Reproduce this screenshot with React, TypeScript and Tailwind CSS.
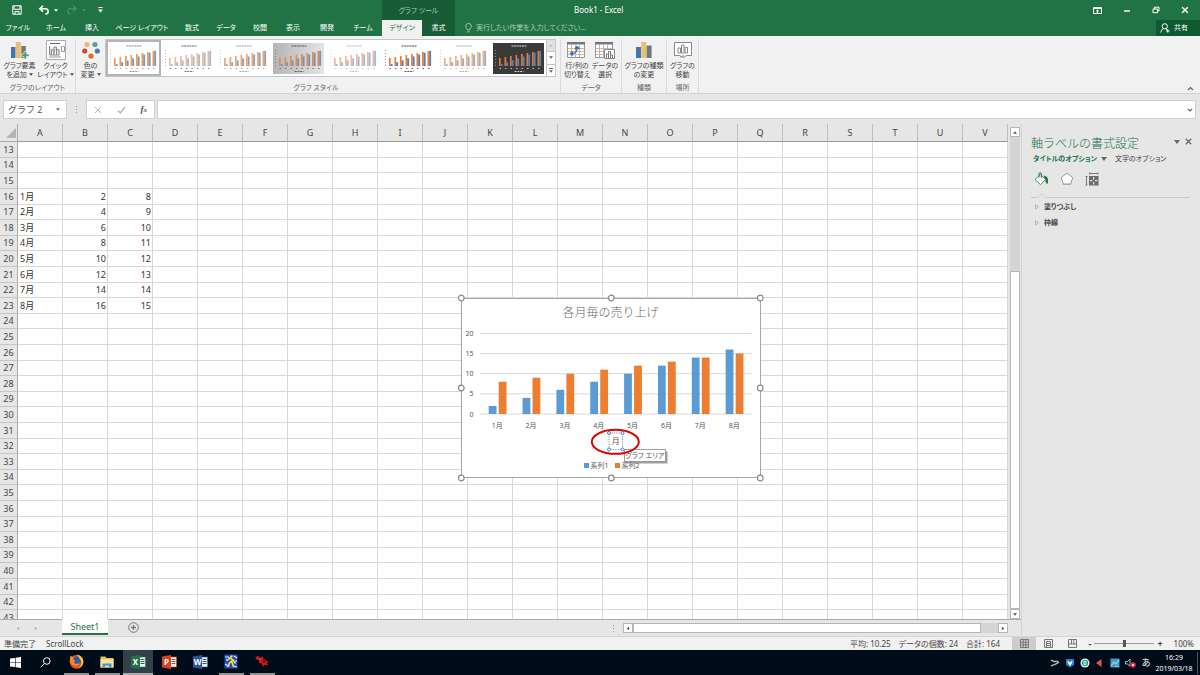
import {useState} from "react";
import type {ReactNode} from "react";
import {clsx} from "clsx";

const TABS = [
    {label: "ファイル", width: "w-9"},
    {label: "ホーム", width: "w-10"},
    {label: "挿入", width: "w-8"},
    {label: "ページ レイアウト", width: "w-17"},
    {label: "数式", width: "w-8"},
    {label: "データ", width: "w-9"},
    {label: "校閲", width: "w-8"},
    {label: "表示", width: "w-8.5"},
    {label: "開発", width: "w-8.5"},
    {label: "チーム", width: "w-9.5"},
];

const COLUMNS = "ABCDEFGHIJKLMNOPQRSTUV".split("");
const FIRST_ROW = 13;
const ROW_COUNT = 31;

const SALES = [
    {month: "1月", a: 2, b: 8},
    {month: "2月", a: 4, b: 9},
    {month: "3月", a: 6, b: 10},
    {month: "4月", a: 8, b: 11},
    {month: "5月", a: 10, b: 12},
    {month: "6月", a: 12, b: 13},
    {month: "7月", a: 14, b: 14},
    {month: "8月", a: 16, b: 15},
];
const SALES_START = 16;

const BLUE = "#5b9bd5";
const ORANGE = "#ed7d31";

const cellText = (row: number, col: string): string | number => {
    const entry = SALES[row - SALES_START];
    if (!entry) return "";
    if (col === "A") return entry.month;
    if (col === "B") return entry.a;
    if (col === "C") return entry.b;
    return "";
};

const Caret = ({className = ""}: {className?: string}) => (
    <svg viewBox="0 0 6 4" className={clsx("h-[3px] w-1 shrink-0", className)} fill="currentColor" aria-hidden="true">
        <path d="M0 0h6L3 4z" />
    </svg>
);

/* ---------- title bar ---------- */

const TitleBar = () => (
    <header className="flex h-9 shrink-0 bg-[#217346] text-white">
        <div className="flex w-[382px] shrink-0 flex-col">
            <div className="flex h-5 items-center pl-3">
                <button aria-label="上書き保存">
                    <svg viewBox="0 0 10 10" className="size-[10px]" fill="none" stroke="currentColor">
                        <path d="M.8.8h8.4v8.4H.8zM2 1v3.300h6V1M3 9V6.600h4V9" />
                    </svg>
                </button>
                <button aria-label="元に戻す" className="ml-4 flex items-center gap-1">
                    <svg viewBox="0 0 12 10" className="h-[10px] w-3" fill="none" stroke="currentColor" strokeWidth="1.6">
                        <path d="M5 .8 1.8 3.7 5 6.6M2 3.7h5.2c2 0 3 1.2 3 2.600S9 9 7.400 9" />
                    </svg>
                    <Caret />
                </button>
                <button aria-label="やり直し" className="ml-2 flex items-center gap-1 text-[#4c9069]">
                    <svg viewBox="0 0 12 10" className="h-[10px] w-3" fill="none" stroke="currentColor" strokeWidth="1.3">
                        <path d="m7 .8 3.200 2.900L7 6.600M10 3.700H4.800c-2 0-3 1.200-3 2.600S3 9 4.600 9" />
                    </svg>
                    <Caret />
                </button>
                <button aria-label="クイック アクセス ツール バーのユーザー設定" className="ml-3">
                    <svg viewBox="0 0 5 6" className="h-1.5 w-[5px]" fill="currentColor">
                        <path d="M.5 0h4v1h-4zM0 2.500h5L2.500 5.500z" />
                    </svg>
                </button>
            </div>
            <nav className="flex h-4 items-center text-[7px]">
                {TABS.map((tab) => (
                    <button key={tab.label} className={clsx("shrink-0 whitespace-nowrap text-center", tab.width)}>
                        {tab.label}
                    </button>
                ))}
            </nav>
        </div>
        <div className="flex w-[73px] shrink-0 flex-col bg-[#185c37] text-[7px]">
            <div className="flex h-5 items-center justify-center pt-0.5 text-[#a9cbb7]">グラフ ツール</div>
            <div className="flex h-4">
                <button className="w-10 bg-[#f1f1f1] text-[#217346]">デザイン</button>
                <button className="flex-1">書式</button>
            </div>
        </div>
        <div className="flex min-w-0 flex-1 flex-col">
            <div className="flex h-5 items-center">
                <h1 className="flex-1 pl-[119px] text-[8px]">Book1 - Excel</h1>
                <div className="flex items-center gap-[21px] pr-[11px]">
                    <button aria-label="リボンの表示オプション">
                        <svg viewBox="0 0 9 7" className="h-[7px] w-[9px]" fill="none" stroke="currentColor">
                            <path d="M.5.5h8v6h-8zM.5 1.500h8M4.500 6V3M3 4.300 4.500 3 6 4.300" />
                        </svg>
                    </button>
                    <button aria-label="最小化">
                        <svg viewBox="0 0 8 8" className="size-2" stroke="currentColor" strokeWidth="1.4">
                            <path d="M1 5h6" />
                        </svg>
                    </button>
                    <button aria-label="元に戻す (縮小)">
                        <svg viewBox="0 0 8 8" className="size-2" fill="none" stroke="currentColor">
                            <path d="M1 3h4.500v3.700H1zM2.500 3V1.200H7V5H5.500" />
                        </svg>
                    </button>
                    <button aria-label="閉じる">
                        <svg viewBox="0 0 8 8" className="size-2" stroke="currentColor" strokeWidth="1.5">
                            <path d="m1.200 1.200 5.600 5.600M6.800 1.200 1.200 6.800" />
                        </svg>
                    </button>
                </div>
            </div>
            <div className="flex h-4 items-center justify-between">
                <label className="flex flex-1 items-center gap-1 pl-2.5 text-[#a9cbb7]">
                    <svg viewBox="0 0 7 10" className="h-[10px] w-[7px]" fill="none" stroke="currentColor">
                        <path d="M2.300 6.800c0-1.400-1.600-1.800-1.600-3.600a2.800 2.800 0 0 1 5.600 0c0 1.800-1.600 2.200-1.600 3.600zM2.300 8.800h2.400" />
                    </svg>
                    <input
                        aria-label="操作アシスト"
                        placeholder="実行したい作業を入力してください..."
                        className="w-40 bg-transparent text-[7px] outline-none placeholder:text-[#a9cbb7]"
                    />
                </label>
                <button className="flex h-4 w-11 items-center gap-1 bg-[#0f5a30] pl-1 text-[7px]">
                    <svg viewBox="0 0 10 10" className="size-[10px]" fill="none" stroke="currentColor">
                        <circle cx="4.800" cy="3.300" r="2.600" />
                        <path d="M.8 9.500c.3-2 1.200-3.200 2.500-3.800M6 5.700l1.300 1.400M7.800 6.300v3.400M6.100 8h3.400" />
                    </svg>
                    共有
                </button>
            </div>
        </div>
    </header>
);

/* ---------- ribbon ---------- */

const AddElementIcon = () => (
    <svg viewBox="0 0 18 18" className="size-[18px]" aria-hidden="true">
        <path fill="#3f76b0" d="M0 6h4.500v11H0z" />
        <path fill="#e8c070" d="M4.800 1h5v16h-5z" />
        <path fill="#777" d="M10.300 5h4.500v12h-4.500z" />
        <path fill="#4f9b7a" stroke="#f1f1f1" strokeWidth=".6" d="M13 10.500h2.500V13H18v2.500h-2.500V18H13v-2.500h-2.500V13H13z" />
    </svg>
);

const QuickLayoutIcon = () => (
    <svg viewBox="0 0 20 20" className="size-5" fill="none" stroke="#8a8a8a" aria-hidden="true">
        <path fill="#fff" stroke="#aaa" d="M.5.5h19v19H.5z" />
        <path d="M4 3.500h10" stroke="#666" />
        <path fill="#ddd" d="M3.500 6v9h10M5.500 15v-5H8v5M8 15V7h2.500v8M10.500 15V9.500H13V15" />
        <path d="M15.500 6.500h3v5h-3zM3 17h12" stroke="#999" />
    </svg>
);

const ColorsIcon = () => (
    <svg viewBox="0 0 18 18" className="size-[18px]" aria-hidden="true">
        <circle cx="5" cy="3.500" r="2.600" fill="#e8bb7a" />
        <circle cx="13" cy="3.500" r="2.600" fill="#5f9e98" />
        <circle cx="2.700" cy="10" r="2.600" fill="#c8502e" />
        <circle cx="15.300" cy="10" r="2.600" fill="#4a79b5" />
        <circle cx="9" cy="15" r="2.600" fill="#dd6b28" />
    </svg>
);

const SheetIcon = ({children}: {children: ReactNode}) => (
    <svg viewBox="0 0 20 18" className="h-[18px] w-5" fill="none" aria-hidden="true">
        <path fill="#fff" stroke="#999" d="M.5 1.500h17v15H.5z" />
        <path stroke="#e0b88a" d="M1 7.500h16M1 10.500h16M1 13.500h16" />
        <path stroke="#b5b5b5" d="M4.500 4v12M8.500 4v12M12.500 4v12" />
        <path fill="#777" d="M0 1h18v2.500H0z" />
        {children}
    </svg>
);

const ChartTypeIcon = () => (
    <svg viewBox="0 0 16 18" className="h-[18px] w-4" aria-hidden="true">
        <path fill="#3f76b0" d="M0 6h5v11H0z" />
        <path fill="#e8c070" d="M5.300 1h5v16h-5z" />
        <path fill="#777" d="M10.600 4.500h5V17h-5z" />
    </svg>
);

const MoveChartIcon = () => (
    <svg viewBox="0 0 18 18" className="size-[18px]" fill="none" stroke="#888" aria-hidden="true">
        <path fill="#fff" d="M.5 1.500h17v13h-5l-3 2-4-2h-5z" />
        <path d="M4 12V7h2.500v5zM7.500 12V4H10v8zM11 12V6.500h2.500V12zM6 16.500l2-1.500h2" />
    </svg>
);

const RibbonButton = ({icon, lines, caret, className}: {icon: ReactNode; lines: [string, string]; caret?: boolean; className: string}) => (
    <button className={clsx("flex shrink-0 flex-col items-center whitespace-nowrap text-[7px] leading-[9px] text-[#444]", className)}>
        <span className="flex h-[22px] items-center">{icon}</span>
        <span>{lines[0]}</span>
        <span className="flex items-center gap-0.5">
            {lines[1]}
            {caret && <Caret />}
        </span>
    </button>
);

const RibbonGroup = ({label, className, children}: {label: string; className: string; children: ReactNode}) => (
    <section className={clsx("flex shrink-0 flex-col justify-between border-r border-[#dadada]", className)}>
        <div className="flex justify-center">{children}</div>
        <h2 className="text-center text-[7px] leading-[10px] text-[#666]">{label}</h2>
    </section>
);

const THUMBS = [
    {bg: "bg-white", blue: "#8495a8", orange: "#f09a5c", text: "#888"},
    {bg: "bg-white", blue: "#b4b8be", orange: "#e3c0a6", text: "#666"},
    {bg: "bg-white", blue: "#9aa0a8", orange: "#eda679", text: "#999"},
    {bg: "bg-linear-to-r from-[#b4b4b4] to-[#e4e4e4]", blue: "#7d93ad", orange: "#e08a55", text: "#555"},
    {bg: "bg-white", blue: "#a4b8d8", orange: "#f2b79c", text: "#bbb"},
    {bg: "bg-white", blue: "#5a7fa8", orange: "#ed7d31", text: "#444"},
    {bg: "bg-white", blue: "#a5acb5", orange: "#eeb288", text: "#aaa"},
    {bg: "bg-[#3a3a3a]", blue: "#5b83ad", orange: "#e07a3a", text: "#ddd"},
];

const StyleThumb = ({index}: {index: number}) => {
    const t = THUMBS[index];
    return (
        <svg viewBox="0 0 50 31" className={clsx("h-[31px] w-full", t.bg)} aria-hidden="true">
            <path d="M18 3h15" stroke={t.text} strokeWidth="1.200" strokeDasharray="2 .6" />
            {SALES.map((s, i) => (
                <g key={s.month}>
                    <rect x={5.5 + i * 5.5} y={23 - s.b} width="1.700" height={s.b} fill={t.orange} />
                    <rect x={7.2 + i * 5.5} y={23 - s.a * 0.95} width="1.900" height={s.a * 0.95} fill={t.blue} />
                </g>
            ))}
            <path d="M6 25.500h42" stroke={t.text} strokeWidth=".8" strokeDasharray="1.500 4" />
            <path d="M2 7v16" stroke={t.text} strokeWidth=".5" strokeDasharray="1 2" />
            <path d="M21 28.500h9" stroke={t.text} strokeWidth=".9" strokeDasharray="2 .8" />
        </svg>
    );
};

const Ribbon = () => {
    const [style, setStyle] = useState(0);
    return (
        <div className="flex h-[58px] shrink-0 items-stretch border-b border-[#d2d2d2] bg-[#f1f1f1] pt-[3px]">
            <RibbonGroup label="グラフのレイアウト" className="w-19">
                <RibbonButton icon={<AddElementIcon />} lines={["グラフ要素", "を追加"]} caret className="w-9" />
                <RibbonButton icon={<QuickLayoutIcon />} lines={["クイック", "レイアウト"]} caret className="w-9" />
            </RibbonGroup>
            <RibbonGroup label="グラフ スタイル" className="w-[485px] pr-1">
                <RibbonButton icon={<ColorsIcon />} lines={["色の", "変更"]} caret className="w-7" />
                <div className="flex h-[38px] w-[451px] border border-[#c6c6c6] bg-white">
                    {THUMBS.map((_, i) => (
                        <button
                            key={i}
                            aria-label={`スタイル ${i + 1}`}
                            onClick={() => setStyle(i)}
                            className={clsx("flex flex-1 items-center border-2", i === style ? "border-[#b5b5b5]" : "border-transparent")}
                        >
                            <StyleThumb index={i} />
                        </button>
                    ))}
                    <div className="flex w-[9px] flex-col divide-y divide-[#c6c6c6] border-l border-[#c6c6c6] text-[#666]">
                        <button aria-label="前の行" className="flex flex-1 items-center justify-center bg-[#e1e1e1] text-[#bbb]">
                            <Caret className="rotate-180" />
                        </button>
                        <button aria-label="次の行" className="flex flex-1 items-center justify-center">
                            <Caret />
                        </button>
                        <button aria-label="その他" className="flex flex-1 flex-col items-center justify-center gap-px">
                            <span className="h-px w-1 bg-[#666]" />
                            <Caret />
                        </button>
                    </div>
                </div>
            </RibbonGroup>
            <RibbonGroup label="データ" className="w-[61px]">
                <RibbonButton
                    icon={
                        <SheetIcon>
                            <path stroke="#2f6fb5" strokeWidth="1.400" d="M3.500 12.500c5 .5 7-2 6.500-6.500M8 8l2-2.500L12.500 8M6 10.500l-2.500 2L6 14.500" />
                        </SheetIcon>
                    }
                    lines={["行/列の", "切り替え"]}
                    className="w-7"
                />
                <RibbonButton
                    icon={
                        <SheetIcon>
                            <path fill="#fff" stroke="#888" d="M9.500 8.500h10v9h-10z" />
                            <path stroke="#777" d="M11.500 17v-4h2v4M13.500 17v-6.500h2V17M15.500 14h2v3" />
                        </SheetIcon>
                    }
                    lines={["データの", "選択"]}
                    className="w-7"
                />
            </RibbonGroup>
            <RibbonGroup label="種類" className="w-[45px]">
                <RibbonButton icon={<ChartTypeIcon />} lines={["グラフの種類", "の変更"]} className="w-11" />
            </RibbonGroup>
            <RibbonGroup label="場所" className="w-8">
                <RibbonButton icon={<MoveChartIcon />} lines={["グラフの", "移動"]} className="w-7" />
            </RibbonGroup>
            <button aria-label="リボンを折りたたむ" className="mt-auto mr-1.5 mb-0.5 ml-auto text-[#666]">
                <svg viewBox="0 0 7 5" className="h-[5px] w-[7px]" fill="none" stroke="currentColor" strokeWidth="1.200">
                    <path d="m1 4 2.500-2.500L6 4" />
                </svg>
            </button>
        </div>
    );
};

const Grip = () => (
    <span className="flex flex-col gap-0.5" aria-hidden="true">
        <span className="size-px bg-[#999]" />
        <span className="size-px bg-[#999]" />
        <span className="size-px bg-[#999]" />
    </span>
);

const FormulaBar = () => (
    <div className="flex h-[30px] shrink-0 items-center bg-[#e6e6e6] pt-1.5 pr-1 pb-[5px] pl-[3px]">
        <label className="flex h-[19px] w-16 items-center border border-[#cfcfcf] bg-white pr-1.5 text-[#666]">
            <input
                aria-label="名前ボックス"
                defaultValue="グラフ 2"
                className="w-0 flex-1 bg-transparent pl-1 text-[9px] text-[#555] outline-none [font-feature-settings:normal]"
            />
            <Caret />
        </label>
        <span className="flex w-[19px] justify-center">
            <Grip />
        </span>
        <div className="flex h-[19px] w-[69px] items-center justify-between border border-[#cfcfcf] bg-white px-[7px]">
            <button aria-label="キャンセル" className="text-[#b5b5b5]">
                <svg viewBox="0 0 8 8" className="size-2" stroke="currentColor">
                    <path d="m1 1 6 6M7 1 1 7" />
                </svg>
            </button>
            <button aria-label="入力" className="text-[#b5b5b5]">
                <svg viewBox="0 0 9 8" className="h-2 w-[9px]" fill="none" stroke="currentColor" strokeWidth="1.300">
                    <path d="m1 4.500 2.300 2.500L8 1" />
                </svg>
            </button>
            <button aria-label="関数の挿入" className="font-['Liberation_Serif',serif] text-[9px] leading-3 font-bold text-[#555] italic">
                f<span className="text-[7px]">x</span>
            </button>
        </div>
        <label className="ml-0.5 flex h-[19px] flex-1 items-center border border-[#cfcfcf] bg-white pr-0.5 text-[#666]">
            <input aria-label="数式バー" className="min-w-0 flex-1 bg-transparent pl-1 text-[9px] outline-none" />
            <svg viewBox="0 0 6 4" className="h-1 w-1.5" fill="none" stroke="currentColor" strokeWidth="1.200">
                <path d="m.8.8 2.200 2.200L5.200.8" />
            </svg>
        </label>
    </div>
);

/* ---------- sheet ---------- */

const PLOT_BOTTOM = 116;
const UNIT = 4.03;
const HANDLES = [
    [0, 0], [150, 0], [299, 0],
    [0, 90], [299, 90],
    [0, 180], [150, 180], [299, 180],
];
const TITLE_HANDLES = [
    [148, 135], [161.5, 135], [148, 151.5], [161.5, 151.5],
];

const SalesChart = () => (
    <svg
        viewBox="-5 -5 310 190"
        className="absolute top-[169px] left-[456px] h-[190px] w-[310px] [font-feature-settings:'palt']"
        role="img"
        aria-label="各月毎の売り上げ"
    >
        <rect x=".5" y=".5" width="299" height="179" fill="#fff" stroke="#a6a6a6" />
        <text x="149.500" y="19" textAnchor="middle" fontSize="12" fill="#666" className="font-light [font-feature-settings:normal]">
            各月毎の売り上げ
        </text>
        {[0, 5, 10, 15, 20].map((v) => (
            <g key={v}>
                <path d={`M19 ${PLOT_BOTTOM - v * UNIT}h271.500`} stroke="#d9d9d9" />
                <text x="12.500" y={PLOT_BOTTOM - v * UNIT + 2.5} textAnchor="end" fontSize="7" fill="#555">
                    {v}
                </text>
            </g>
        ))}
        {SALES.map((s, i) => {
            const x = 27.7 + i * 33.85;
            return (
                <g key={s.month}>
                    <rect x={x} y={PLOT_BOTTOM - s.a * UNIT} width="7.800" height={s.a * UNIT} fill={BLUE} />
                    <rect x={x + 10} y={PLOT_BOTTOM - s.b * UNIT} width="7.800" height={s.b * UNIT} fill={ORANGE} />
                    <text x={x + 8.5} y="129.500" textAnchor="middle" fontSize="7" fill="#555">
                        {s.month}
                    </text>
                </g>
            );
        })}
        <rect x="123" y="165" width="5" height="5" fill={BLUE} />
        <text x="129.500" y="170" fontSize="7" fill="#555">系列1</text>
        <rect x="154" y="165" width="5" height="5" fill={ORANGE} />
        <text x="160.500" y="170" fontSize="7" fill="#555">系列2</text>

        {HANDLES.map(([x, y]) => (
            <circle key={`${x}-${y}`} cx={x + 0.3} cy={y} r="2.800" fill="#fff" stroke="#8a8a8a" strokeWidth="1.200" />
        ))}

        <rect x="148" y="135" width="13.500" height="16.500" fill="none" stroke="#777" strokeWidth=".8" strokeDasharray="1.200 1.200" />
        <text x="154.700" y="146" textAnchor="middle" fontSize="8" fill="#555">月</text>

        <rect x="165" y="153.500" width="41.500" height="12" fill="#777" opacity=".7" />
        <rect x="163.500" y="151.500" width="41" height="12" fill="#fff" stroke="#8a8a8a" strokeWidth=".8" />
        <text x="184" y="160" textAnchor="middle" fontSize="7" fill="#555">グラフ エリア</text>
        {TITLE_HANDLES.map(([x, y]) => (
            <circle key={`${x}-${y}`} cx={x} cy={y} r="1.500" fill="#fff" stroke="#2f84c8" />
        ))}
        <ellipse cx="154.300" cy="143.800" rx="23.500" ry="12" fill="none" stroke="#e00000" strokeWidth="2" />
    </svg>
);

const Grid = () => (
    <table className="w-full table-fixed border-separate border-spacing-0 text-[9px] leading-3 text-[#333]">
        <thead>
            <tr className="h-[18px] bg-[#e6e6e6] text-[#444]">
                <th className="w-[18px] border-r border-b border-[#ababab] p-0 align-bottom">
                    <svg viewBox="0 0 10 10" className="mb-[3px] ml-1.5 size-[10px]" aria-hidden="true">
                        <path d="M10 0v10H0z" fill="#b4b4b4" />
                    </svg>
                </th>
                {COLUMNS.map((c) => (
                    <th key={c} scope="col" className="border-r border-b border-r-[#bdbdbd] border-b-[#9b9b9b] p-0 font-normal">
                        {c}
                    </th>
                ))}
            </tr>
        </thead>
        <tbody>
            {Array.from({length: ROW_COUNT}, (_, i) => FIRST_ROW + i).map((row, i) => (
                <tr key={row} className={i % 5 === 1 || i % 5 === 4 ? "h-[15px]" : "h-4"}>
                    <th scope="row" className="border-r border-b border-r-[#ababab] border-b-[#c6c6c6] bg-[#e6e6e6] p-0 font-normal text-[#444]">
                        {row}
                    </th>
                    {COLUMNS.map((c) => (
                        <td
                            key={c}
                            className={clsx("border-r border-b border-[#d8d8d8] bg-white p-0", c === "A" ? "pl-0.5 text-left" : "pr-px text-right")}
                        >
                            {cellText(row, c)}
                        </td>
                    ))}
                </tr>
            ))}
        </tbody>
    </table>
);

const VerticalScroll = () => (
    <div className="flex w-[13px] shrink-0 flex-col items-center bg-[#e6e6e6] pt-[3px] text-[#555]">
        <button aria-label="上へスクロール" className="flex size-[10px] items-center justify-center border border-[#b5b5b5] bg-white">
            <Caret className="rotate-180" />
        </button>
        <div className="flex w-[10px] flex-1 flex-col bg-[#d4d4d4]">
            <div className="flex-2" />
            <div className="flex-5 border border-[#b5b5b5] bg-white" />
        </div>
        <button aria-label="下へスクロール" className="flex size-[10px] items-center justify-center border border-[#b5b5b5] bg-white">
            <Caret />
        </button>
    </div>
);

const SheetTabs = () => (
    <div className="flex h-[17px] shrink-0 items-start border-t border-[#ababab] bg-[#e6e6e6] pr-[13px]">
        <div className="flex h-full w-[62px] items-center gap-3.5 pl-4 text-[#b5b5b5]">
            <button aria-label="前のシート"><Caret className="rotate-90" /></button>
            <button aria-label="次のシート"><Caret className="-rotate-90" /></button>
        </div>
        <button className="-mt-px h-4 w-[46px] border-b-2 border-[#217346] bg-white pt-0.5 text-[9px] leading-3 text-[#217346]">Sheet1</button>
        <button aria-label="新しいシート" className="mt-0.5 ml-5">
            <svg viewBox="0 0 11 11" className="size-[11px]" fill="none" stroke="#777">
                <circle cx="5.500" cy="5.500" r="4.800" />
                <path d="M5.500 3v5M3 5.500h5" strokeWidth="1.300" />
            </svg>
        </button>
        <div className="ml-auto flex h-full items-center gap-[9px] text-[#555]">
            <Grip />
            <div className="flex h-[10px] w-[385px] bg-[#d4d4d4]">
                <button aria-label="左へスクロール" className="flex size-[10px] items-center justify-center border border-[#b5b5b5] bg-white">
                    <Caret className="rotate-90" />
                </button>
                <div className="w-[348px] border border-[#b5b5b5] bg-white" />
                <button aria-label="右へスクロール" className="ml-auto flex size-[10px] items-center justify-center border border-[#b5b5b5] bg-white">
                    <Caret className="-rotate-90" />
                </button>
            </div>
        </div>
    </div>
);

/* ---------- format pane ---------- */

const FormatPane = () => (
    <aside className="w-[179px] shrink-0 border-l border-[#d4d4d4] bg-[#e6e6e6] pt-3 pr-2.5 pl-[9px] text-[#444]">
        <div className="flex items-start justify-between">
            <h2 className="text-[12px] leading-4 font-light text-[#217346] [font-feature-settings:normal]">軸ラベルの書式設定</h2>
            <div className="-mr-0.5 flex items-center gap-[5px] pt-0.5 text-[#666]">
                <button aria-label="作業ウィンドウ オプション">
                    <svg viewBox="0 0 6 4" className="h-1 w-1.5" fill="currentColor">
                        <path d="M0 0h6L3 4z" />
                    </svg>
                </button>
                <button aria-label="閉じる">
                    <svg viewBox="0 0 7 7" className="size-[7px]" stroke="currentColor" strokeWidth="1.300">
                        <path d="m.8.8 5.400 5.400M6.200.8.8 6.200" />
                    </svg>
                </button>
            </div>
        </div>
        <div className="flex items-center pt-px pl-0.5 text-[7px] leading-3">
            <button className="flex items-center gap-1 font-bold text-[#217346]">
                タイトルのオプション
                <svg viewBox="0 0 6 4" className="h-1 w-1.5 text-[#666]" fill="currentColor" aria-hidden="true">
                    <path d="M0 0h6L3 4z" />
                </svg>
            </button>
            <button className="ml-2">文字のオプション</button>
        </div>
        <div className="flex items-center gap-[11px] pt-[7px] pl-[3px]">
            <button aria-label="塗りつぶしと線">
                <svg viewBox="0 0 15 14" className="h-[14px] w-[15px]" fill="none">
                    <path d="M9.500 3.500c4 .3 5.600 3.500 4 8.500-2-.5-2-3-2.500-5z" fill="#217346" />
                    <path d="m6.500 2.500 5.200 5-5.200 5.200L1 7.500z" fill="#fff" stroke="#4b8f69" />
                    <path d="M5 5.500V1.800C5 .3 7.300.3 7.300 1.800v4.500" stroke="#217346" />
                </svg>
            </button>
            <button aria-label="効果">
                <svg viewBox="0 0 14 14" className="size-[14px]">
                    <path d="M2.500 11.500 3 13h8l.5-1.500z" fill="#bbb" />
                    <path d="M7 1.200 12.800 5.500l-2.200 6.500H3.400L1.200 5.500z" fill="#fff" stroke="#999" />
                </svg>
            </button>
            <button aria-label="サイズとプロパティ">
                <svg viewBox="0 0 14 14" className="size-[14px]" fill="none" stroke="#777">
                    <path d="M4 1.500h9M4.500.5v2M13 .5v2M1.500 4v9M.5 4.500h2M.5 13h2" />
                    <path d="M4 4h9.500v9.500H4z" fill="#6b6b6b" stroke="none" />
                    <path d="M8.700 5v2.500M8.700 10v2.500M5 8.700h2.500M10 8.700h2.500" stroke="#fff" />
                </svg>
            </button>
        </div>
        <svg viewBox="0 0 160 6" className="mt-1.5 h-1.5 w-full" fill="none" stroke="#c9c9c9" preserveAspectRatio="none" aria-hidden="true">
            <path d="M0 5.500h7l4-4 4 4h145" />
        </svg>
        <div className="flex flex-col pt-px pl-1 text-[7px] leading-4 font-bold">
            {["塗りつぶし", "枠線"].map((label) => (
                <button key={label} className="flex items-center gap-[5px]">
                    <svg viewBox="0 0 4 6" className="h-1.5 w-1" fill="none" stroke="#aaa" strokeWidth=".8">
                        <path d="M.5.8 3.300 3 .5 5.200z" />
                    </svg>
                    {label}
                </button>
            ))}
        </div>
    </aside>
);

/* ---------- status bar ---------- */

const StatusBar = () => (
    <footer className="flex h-[14px] shrink-0 items-center border-t border-[#d4d4d4] bg-[#f1f1f1] pr-1.5 pl-1 text-[8px] text-[#444]">
        <span className="w-[42px] shrink-0">準備完了</span>
        <span>ScrollLock</span>
        <div className="ml-auto flex gap-2 pr-3">
            <span>平均: 10.25</span>
            <span>データの個数: 24</span>
            <span>合計: 164</span>
        </div>
        <div className="flex h-full items-center text-[#777]">
            <button aria-label="標準" className="flex h-full w-6 items-center justify-center bg-[#cdcdcd]">
                <svg viewBox="0 0 9 9" className="size-[9px]" fill="none" stroke="currentColor">
                    <path d="M.5.5h8v8h-8zM.5 3.200h8M.5 5.800h8M3.200.5v8M5.800.5v8" />
                </svg>
            </button>
            <button aria-label="ページ レイアウト表示" className="flex h-full w-6 items-center justify-center">
                <svg viewBox="0 0 9 9" className="size-[9px]" fill="none" stroke="currentColor">
                    <path d="M.5.5h8v8h-8zM2.500 2.500h4v6M2.500 2.500v6M3 4.500h3M3 6.500h3" />
                </svg>
            </button>
            <button aria-label="改ページ プレビュー" className="flex h-full w-6 items-center justify-center">
                <svg viewBox="0 0 9 9" className="size-[9px]" fill="none" stroke="currentColor">
                    <path d="M.5.5h8v8h-8zM3.500.5v4.500h5M.5 5h3M5.800.5V5" />
                </svg>
            </button>
        </div>
        <button aria-label="縮小" className="ml-0.5 w-2 text-[9px] leading-3 font-bold">-</button>
        <input
            type="range"
            aria-label="ズーム"
            min={0}
            max={200}
            defaultValue={100}
            className="h-2 w-15 appearance-none bg-transparent [&::-webkit-slider-runnable-track]:h-px [&::-webkit-slider-runnable-track]:bg-[#999] [&::-webkit-slider-thumb]:-mt-[3px] [&::-webkit-slider-thumb]:h-[7px] [&::-webkit-slider-thumb]:w-[3px] [&::-webkit-slider-thumb]:appearance-none [&::-webkit-slider-thumb]:bg-[#555]"
        />
        <button aria-label="拡大" className="w-3 text-[9px] leading-3 font-bold">+</button>
        <span className="w-7 text-right">100%</span>
    </footer>
);

/* ---------- taskbar ---------- */

const OfficeIcon = ({letter, color}: {letter: string; color: string}) => (
    <svg viewBox="0 0 15 14" className="h-[14px] w-[15px]" aria-hidden="true">
        <path d="M7 2h7.500v10H7z" fill="#f4f4f4" stroke={color} strokeWidth=".6" />
        <path d="M9.500 4.500h4M9.500 6.500h4M9.500 8.500h4" stroke={color} />
        <path d="M0 1.500 9 0v14l-9-1.500z" fill={color} />
        <text x="4.500" y="9.800" textAnchor="middle" fontSize="8" fontWeight="700" fill="#fff">
            {letter}
        </text>
    </svg>
);

const TASKS: {name: string; state: "none" | "open" | "active"; icon: ReactNode}[] = [
    {
        name: "Firefox",
        state: "open",
        icon: (
            <svg viewBox="0 0 15 15" className="size-[15px]">
                <circle cx="7.500" cy="7.800" r="6.900" fill="#e8541c" />
                <circle cx="7.800" cy="6.800" r="4.300" fill="#2c5aa8" />
                <path d="M8 .8c4.500.5 6.800 4 6.300 8-.5 3-3 5.200-5 5.500 2.500-2 3.500-4.500 2.700-7C11.500 5 9.500 3.500 8 .8z" fill="#ffc32e" />
                <path d="M1 4c0-1 .5-2 1-2.500.5 1 1.500 1.500 3 1.500L4 5.500c1 .5 2 .3 2.500.8-.8 1-1.500 1-1.500 2 1 2 4 2 6 .5-1 3-5 4-7.500 2S.6 7 1 4z" fill="#ff8a1f" />
            </svg>
        ),
    },
    {
        name: "エクスプローラー",
        state: "open",
        icon: (
            <svg viewBox="0 0 14 12" className="h-3 w-[14px]">
                <path d="M.5.5h5l1 1.500h7v9.500H.5z" fill="#e8b84a" />
                <path d="M.5 3h13v8.500H.5z" fill="#fbe19a" />
                <path d="M2.500 11.500V7.500h9v4H9V9.800H5v1.700z" fill="#3f9bd8" />
            </svg>
        ),
    },
    {name: "Excel", state: "active", icon: <OfficeIcon letter="X" color="#217346" />},
    {name: "PowerPoint", state: "none", icon: <OfficeIcon letter="P" color="#d04423" />},
    {name: "Word", state: "none", icon: <OfficeIcon letter="W" color="#2b579a" />},
    {
        name: "ペイント ツール",
        state: "open",
        icon: (
            <svg viewBox="0 0 14 15" className="h-[15px] w-[14px]" fill="none">
                <path fill="#1f4fc0" d="M.5.5h13v14H.5z" />
                <path stroke="#e8f0ff" strokeWidth="1.200" d="M1 3h4M10 2l3 2M1 10l3 2M9 12l4 1M2 6h2M11 7h2" />
                <path stroke="#ffe23a" strokeWidth="1.600" d="M8.500 1.500 6 4l3 2-3.500 3L4 13M9 6l2.500 3.500M6 4 3 6.500M8 8l1.500 5" />
            </svg>
        ),
    },
    {
        name: "キャプチャ ツール",
        state: "open",
        icon: (
            <svg viewBox="0 0 15 13" className="h-[13px] w-[15px]">
                <path d="M.5 2 3.500 1l1.500 2L8 1.500l.5 3.300 2.500-.6L10.500 6l3.800.8-2.800 1.400 1.800 2.600-3.600-1L8 12 6.800 8.500 3.500 7.800 4.500 5 1 4.500z" fill="#d01818" />
                <circle cx="9" cy="6.800" r="1.200" fill="#5a0505" />
                <circle cx="5" cy="4.300" r=".8" fill="#ff6b5a" />
            </svg>
        ),
    },
];

const TrayIcons = () => (
    <div className="flex items-center gap-[5px]">
        <svg viewBox="0 0 10 8" className="h-2 w-[10px]" fill="none" stroke="#b5b5b5" strokeWidth="1.400" aria-hidden="true">
            <path d="M1 1.200 4 2.500h4.500M1 6.800l4-1.500 4-2" />
        </svg>
        <svg viewBox="0 0 10 10" className="size-[10px]" fill="none" aria-hidden="true">
            <path d="M1 1h8v6L5 9.500 1 7z" fill="#2c7fd0" />
            <path d="M3 3.500 5 6.500l2-3" stroke="#fff" strokeWidth="1.600" />
        </svg>
        <svg viewBox="0 0 10 10" className="size-[10px]" fill="none" aria-hidden="true">
            <circle cx="5" cy="5" r="4.500" fill="#e4f6f2" />
            <circle cx="5" cy="5" r="2.600" stroke="#1d9c8c" strokeWidth="1.200" />
            <path d="M3 5h4" stroke="#1d9c8c" />
        </svg>
        <svg viewBox="0 0 8 10" className="h-[10px] w-2" aria-hidden="true">
            <path d="M6.500 1v8L1 5z" fill="#e0564e" />
        </svg>
        <svg viewBox="0 0 10 10" className="ml-0.5 size-[10px]" fill="none" aria-hidden="true">
            <path d="M.5.500h9v9h-9z" fill="#3c9bd6" />
            <path d="M1 8 4 4l2 2 3-4" stroke="#8fd0c8" strokeWidth="1.400" />
            <path d="M5 8.500h4" stroke="#d8b48a" />
        </svg>
        <svg viewBox="0 0 11 10" className="h-[10px] w-[11px]" fill="none" aria-hidden="true">
            <path d="M.5 3.500h2L5 1.200v7L2.500 6H.5z" stroke="#ddd" strokeWidth=".8" />
            <circle cx="8" cy="7" r="2.800" fill="#d8303a" />
            <path d="m7 6 2 2M9 6 7 8" stroke="#fff" strokeWidth=".8" />
        </svg>
    </div>
);

const Taskbar = () => (
    <div className="flex h-[25px] shrink-0 items-stretch bg-[#000d18] text-white">
        <button aria-label="スタート" className="flex w-[30px] items-center justify-center">
            <svg viewBox="0 0 11 11" className="size-[11px]" fill="currentColor">
                <path d="M0 1.600 5 .9v4.300H0zM5.600.8 11 0v5.200H5.600zM0 5.800h5v4.300l-5-.7zM5.600 5.800H11V11l-5.400-.8z" />
            </svg>
        </button>
        <button aria-label="検索" className="flex w-[31px] items-center justify-center">
            <svg viewBox="0 0 11 11" className="size-[11px]" fill="none" stroke="currentColor">
                <circle cx="6.800" cy="4" r="3.300" />
                <path d="M4.300 6.500.7 10.300" />
            </svg>
        </button>
        <div className="flex gap-px">
            {TASKS.map((task) => (
                <button
                    key={task.name}
                    aria-label={task.name}
                    className={clsx("flex w-[30px] flex-col items-center", task.state === "active" && "bg-[#33404a]")}
                >
                    <span className="flex flex-1 items-center justify-center">{task.icon}</span>
                    <span
                        className={clsx(
                            "h-0.5",
                            task.state === "active" && "w-full bg-[#a8aeb3]",
                            task.state === "open" && "w-[25px] bg-[#8d9499]",
                        )}
                    />
                </button>
            ))}
        </div>
        <div className="ml-auto flex items-center">
            <TrayIcons />
            <button aria-label="入力モード" className="ml-1 w-3 text-[9px] leading-3">あ</button>
            <time dateTime="2019-03-18T16:29" className="w-[46px] border-r border-[#4a555e] pr-px text-center text-[7px] leading-[11px]">
                16:29
                <br />
                2019/03/18
            </time>
            <span className="w-0.5" />
        </div>
    </div>
);

export default function App() {
    return (
        <div
            lang="ja"
            className="flex h-screen flex-col overflow-hidden bg-[#e6e6e6] font-['Noto_Sans','Noto_Sans_CJK_JP',sans-serif] [font-feature-settings:'palt']"
        >
            <TitleBar />
            <Ribbon />
            <FormulaBar />
            <main className="flex min-h-0 flex-1">
                <div className="flex min-w-0 flex-1 flex-col">
                    <div className="relative flex min-h-0 flex-1 overflow-hidden">
                        <div className="min-w-0 flex-1">
                            <Grid />
                        </div>
                        <VerticalScroll />
                        <SalesChart />
                    </div>
                    <SheetTabs />
                </div>
                <FormatPane />
            </main>
            <StatusBar />
            <Taskbar />
        </div>
    );
}
